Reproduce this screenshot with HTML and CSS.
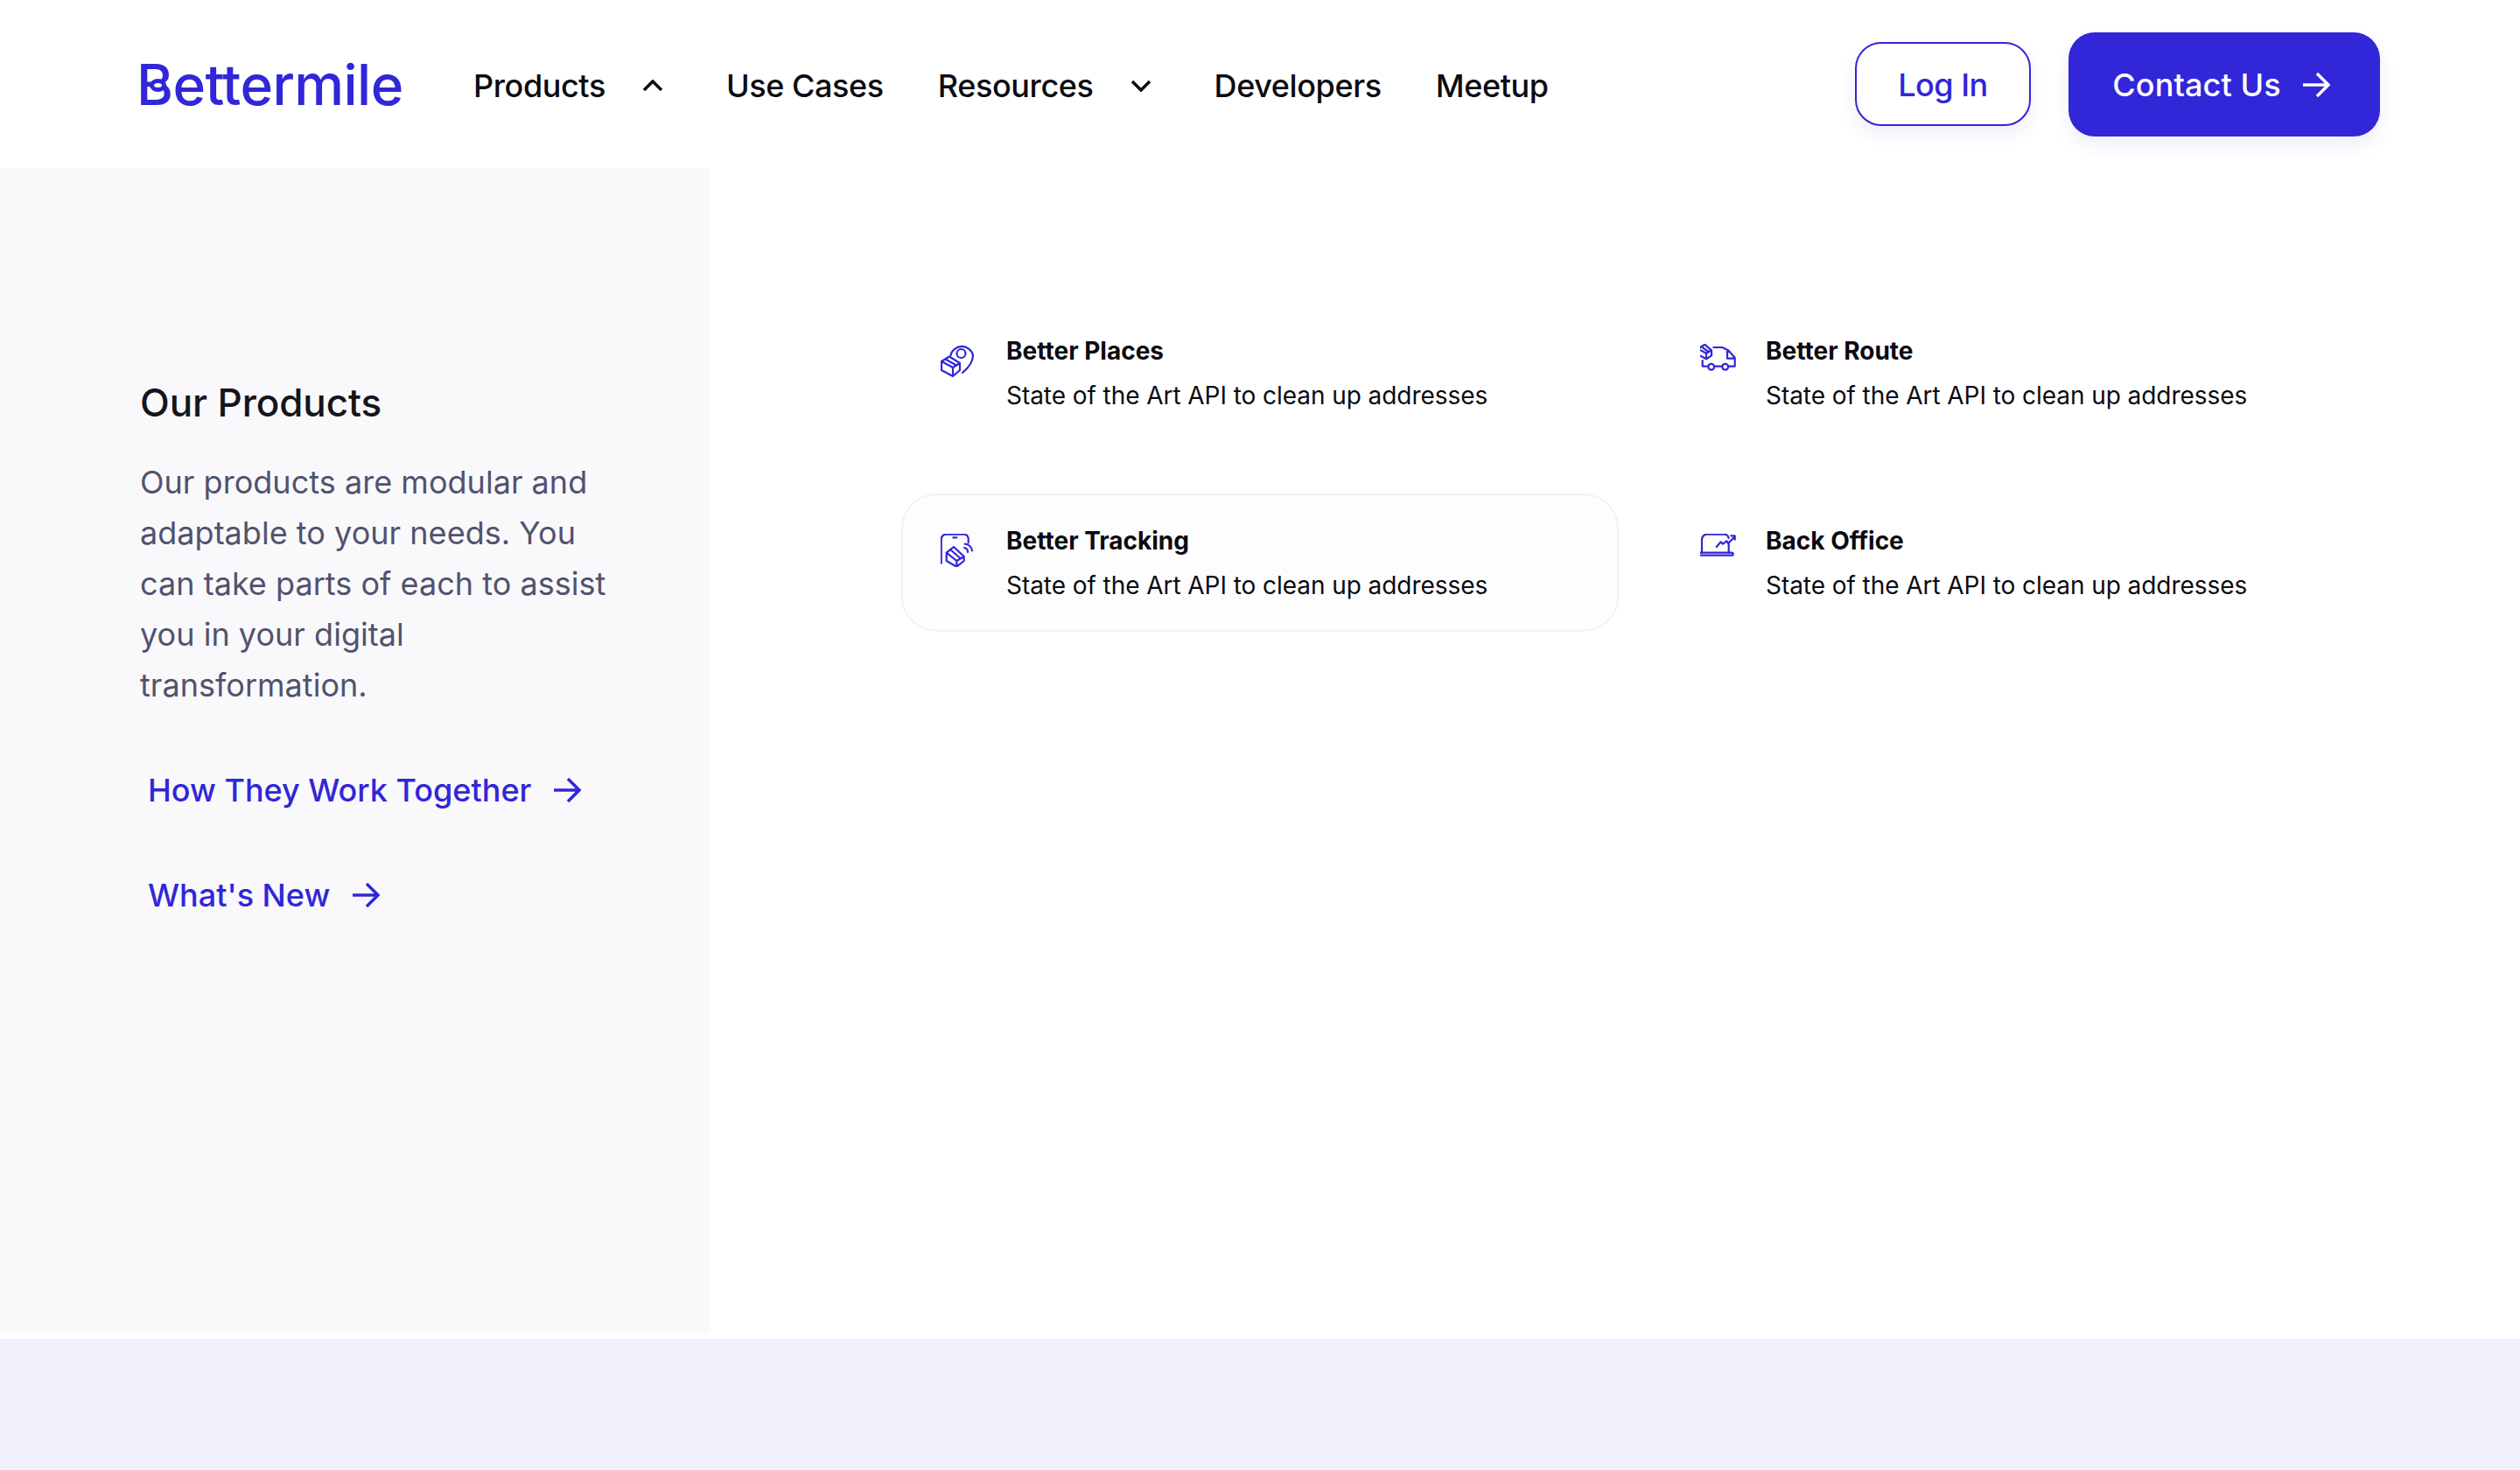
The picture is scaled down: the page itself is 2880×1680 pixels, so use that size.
FILE: index.html
```html
<!DOCTYPE html>
<html lang="en">
<head>
  <meta charset="UTF-8" />
  <title>Bettermile - Products</title>
  <link rel="stylesheet" href="styles.css">
</head>
<body>
  <nav class="topbar">
    <a class="logo" href="#">Bettermile</a>
    <div class="nav-menu">
      <a class="nav-item" href="#">Products
        <svg class="caret" viewBox="0 0 24 14"><path d="M2 12 L12 2 L22 12"/></svg>
      </a>
      <a class="nav-item" href="#">Use Cases</a>
      <a class="nav-item" href="#">Resources
        <svg class="caret" viewBox="0 0 24 14"><path d="M2 2 L12 12 L22 2"/></svg>
      </a>
      <a class="nav-item" href="#">Developers</a>
      <a class="nav-item" href="#">Meetup</a>
    </div>
    <div class="nav-actions">
      <a class="btn btn-outline" href="#">Log In</a>
      <a class="btn btn-solid" href="#">Contact Us
        <svg class="arrow" viewBox="0 0 32 30"><path d="M1 15 H30 M17 2 L30 15 L17 28"/></svg>
      </a>
    </div>
  </nav>

  <div class="panel">
    <aside class="sidebar">
      <h2>Our Products</h2>
      <p>Our products are modular and adaptable to your needs. You can take parts of each to assist you in your digital transformation.</p>
      <a class="side-link" href="#">How They Work Together
        <svg class="arrow" viewBox="0 0 32 30"><path d="M1 15 H30 M17 2 L30 15 L17 28"/></svg>
      </a>
      <a class="side-link" href="#">What's New
        <svg class="arrow" viewBox="0 0 32 30"><path d="M1 15 H30 M17 2 L30 15 L17 28"/></svg>
      </a>
    </aside>

    <main class="products">
      <a class="card" href="#">
        <div class="card-icon">
          <svg viewBox="0 0 44 38">
            <circle cx="23.5" cy="11" r="5"/>
            <path d="M11.5 13 A13 12.5 0 0 1 37 13 C37 21 31 28 25 33"/>
            <path d="M1 20 L10 14.5 L22 22 V30 L14 37 L1 30 Z M1 20 L14 27 L22 22 M14 27 V37 M5.500 17.500 L18 24.500"/>
          </svg>
        </div>
        <div>
          <div class="card-title">Better Places</div>
          <div class="card-text">State of the Art API to clean up addresses</div>
        </div>
      </a>
      <a class="card" href="#">
        <div class="card-icon">
          <svg viewBox="3 0 44 38">
            <path d="M0.700 5.700 L8.300 0.700 L16 7.300 V13.300 L10 17.300 L0.700 12.300 Z M0.700 5.700 L10 10.800 L16 7.300 M10 10.800 V17.300 M4.500 3.200 L12.500 9"/>
            <path d="M18.300 4 H28.300 L35 7.300 L42.700 15.700 V25.700 H36 M34 8.300 V16.700 H41.700"/>
            <path d="M5.700 19 V25.700 H12.300 M19 25.700 H28"/>
            <circle cx="15.700" cy="26.300" r="3.400"/>
            <circle cx="31.700" cy="26.300" r="3.400"/>
          </svg>
        </div>
        <div>
          <div class="card-title">Better Route</div>
          <div class="card-text">State of the Art API to clean up addresses</div>
        </div>
      </a>
      <a class="card card-active" href="#">
        <div class="card-icon">
          <svg viewBox="0 0 44 38">
            <path d="M0.700 33.700 V6 A5.500 5.500 0 0 1 6.700 0.700 H26.700 A5 5 0 0 1 31.700 6 V10.300 M14.300 4.300 H18.300"/>
            <path d="M6.700 21.700 L15 15 L26.700 26 V31 L18.300 37.700 L6.700 31 Z M6.700 21.700 L18.300 31 L26.700 26 M18.300 31 V37.700 M11 18 L22.500 28"/>
            <path d="M27 16 A5 5 0 0 1 31 21 M27.700 11.700 A9 9 0 0 1 36 19.300"/>
          </svg>
        </div>
        <div>
          <div class="card-title">Better Tracking</div>
          <div class="card-text">State of the Art API to clean up addresses</div>
        </div>
      </a>
      <a class="card" href="#">
        <div class="card-icon">
          <svg viewBox="3 0 44 38">
            <path d="M5 21.700 V6.700 A6 6 0 0 1 11.700 0.700 H30 A5.500 5.500 0 0 1 35.700 5 M35.700 11.700 V21.700"/>
            <rect x="0.700" y="21.700" width="40" height="3" rx="1.500"/>
            <path d="M21.700 15 L26.700 9.300 L29 11.700 L33.300 8.300 L35 11 L42.700 3.300 M38.300 2.300 H42.700 V6.700"/>
          </svg>
        </div>
        <div>
          <div class="card-title">Back Office</div>
          <div class="card-text">State of the Art API to clean up addresses</div>
        </div>
      </a>
    </main>
  </div>

  <div class="band"></div>
</body>
</html>
```

FILE: styles.css
```css
body {
  margin: 0;
  padding: 0;
  height: 1680px;
  overflow: hidden;
  display: flex;
  flex-direction: column;
  font-family: "Inter", "Liberation Sans", sans-serif;
  background-color: #fff;
  color: #0b0b12;
}

a {
  color: inherit;
  text-decoration: none;
}

.topbar {
  height: 192px;
  padding: 0 160px;
  display: flex;
  align-items: center;
  flex-shrink: 0;
}

.logo {
  position: relative;
  font-size: 64px;
  font-weight: 500;
  letter-spacing: -0.6px;
  color: #3126d8;
  width: 385px;
  margin-left: -4px;
}

/* the ring inside the B */
.logo::after {
  content: "";
  position: absolute;
  left: 15px;
  top: 50%;
  width: 9px;
  height: 5px;
  margin-top: -6px;
  border: 5px solid #3126d8;
  border-radius: 50%;
  background-color: #fff;
}

.nav-menu {
  display: flex;
  align-items: center;
  gap: 62px;
  flex: 1;
  padding-top: 3px;
}

.nav-item {
  display: flex;
  align-items: center;
  gap: 42px;
  font-size: 36px;
  font-weight: 500;
  letter-spacing: -0.4px;
}

.caret {
  width: 24px;
  height: 14px;
  margin-right: 10px;
  fill: none;
  stroke: #0b0b12;
  stroke-width: 3.5;
}

.nav-actions {
  display: flex;
  align-items: center;
  gap: 43px;
}

.btn {
  display: flex;
  align-items: center;
  justify-content: center;
  font-size: 36px;
  font-weight: 500;
  letter-spacing: -0.5px;
  box-sizing: border-box;
  box-shadow: 0 10px 20px rgba(49, 38, 216, 0.08);
}

.btn-outline {
  width: 201px;
  height: 96px;
  padding-top: 2px;
  border: 2px solid #3126d8;
  border-radius: 30px;
  color: #3126d8;
  background-color: #fff;
}

.btn-solid {
  width: 356px;
  height: 119px;
  gap: 24px;
  padding: 2px 7px 0 0;
  border-radius: 30px;
  color: #fff;
  background-color: #3126d8;
  letter-spacing: 0.1px;
}

.arrow {
  width: 32px;
  height: 30px;
  fill: none;
  stroke: currentColor;
  stroke-width: 3.5;
}

.panel {
  display: flex;
  height: 1331px;
  flex-shrink: 0;
}

.sidebar {
  width: 812px;
  box-sizing: border-box;
  padding: 239px 100px 0 160px;
  background-color: #f9f9fb;
}

.sidebar h2 {
  margin: 0 0 33px;
  font-size: 44px;
  font-weight: 500;
  line-height: 58px;
  letter-spacing: -0.1px;
  color: #15151c;
}

.sidebar p {
  margin: 0 0 61px;
  font-size: 36px;
  line-height: 58px;
  letter-spacing: 0.03px;
  color: #52526e;
}

.side-link {
  display: flex;
  align-items: center;
  gap: 25px;
  height: 60px;
  margin: 0 0 60px 9px;
  font-size: 36px;
  font-weight: 500;
  letter-spacing: 0;
  color: #3126d8;
}

.products {
  flex: 1;
  padding: 155px 0 0 218px;
  display: grid;
  grid-template-columns: 820px 820px;
  grid-auto-rows: 158px;
  column-gap: 48px;
  row-gap: 59px;
}

.card {
  display: flex;
  gap: 31px;
  box-sizing: border-box;
  padding: 34px 0 0 43px;
  border: 2px solid transparent;
  border-radius: 40px;
}

.card-active {
  border-color: #f1f0fd;
  background-color: #fdfdfe;
}

.card-icon {
  width: 44px;
  height: 38px;
  margin-top: 10px;
}

.card-icon svg {
  display: block;
  width: 44px;
  height: 38px;
  fill: none;
  stroke: #3126d8;
  stroke-width: 2.2;
  stroke-linejoin: round;
  stroke-linecap: round;
}

.card-title {
  font-size: 28px;
  font-weight: 700;
  line-height: 36px;
  letter-spacing: 0;
  margin-bottom: 15px;
}

.card-text {
  font-size: 28px;
  line-height: 36px;
  letter-spacing: -0.06px;
}

.band {
  flex: 1;
  margin-top: 7px;
  background-color: #f1f1fc;
}
```
